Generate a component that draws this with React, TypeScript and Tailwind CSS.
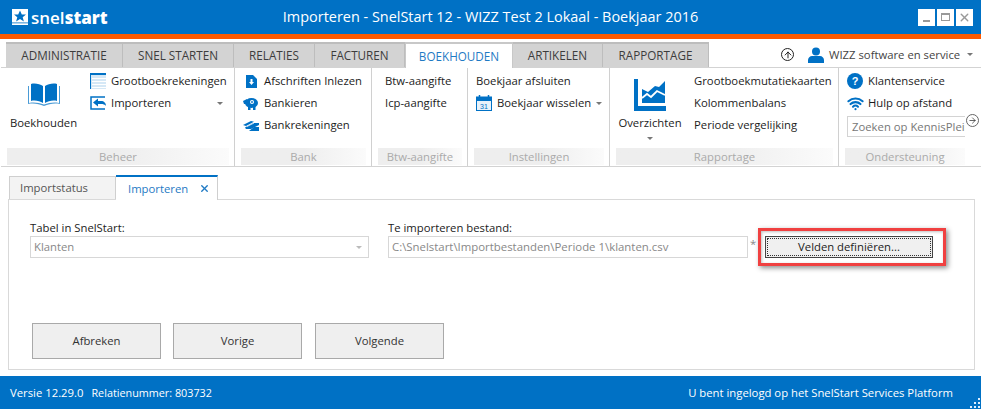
import React from "react";
import { ArrowUp, ArrowRight, X, Wifi } from "lucide-react";

function Caret({ className = "" }: { className?: string }) {
  return <span className={"inline-block w-0 h-0 border-l-[3px] border-r-[3px] border-t-[3px] border-l-transparent border-r-transparent border-t-[#777] " + className} />;
}

function Logo() {
  return (
    <svg width="16" height="16" viewBox="0 0 16 16">
      <rect width="16" height="16" fill="#fff" />
      <path d="M8 1.500l1.800 4h4.200l-3.300 2.700 1.200 4.200L8 10l-3.900 2.400 1.200-4.200L2 5.500h4.200z" fill="#0071c5" />
      <rect y="13.500" width="16" height="0.800" fill="#0071c5" />
    </svg>
  );
}
function Ledger() {
  return (
    <svg width="16" height="16" viewBox="0 0 16 16">
      <rect width="16" height="16" fill="#d5e8f6" />
      <path d="M0.500 0v16M0 0.500h16" stroke="#0071c5" />
      <rect x="0" y="0" width="16" height="2" fill="#0071c5" />
      <path d="M2 5.500h14M2 8.500h14M2 11.500h14M2 14.500h14" stroke="#fff" />
    </svg>
  );
}
function ImportIcon() {
  return (
    <svg width="16" height="14" viewBox="0 0 16 14">
      <path d="M15 1H1v12h14" fill="#fff" stroke="#0071c5" strokeWidth="1.500" />
      <path d="M3 6.500l5-4v2.500h3c3 0 5 2 5 5-1-1.500-3-2-5-2H8v2.500z" fill="#0071c5" />
    </svg>
  );
}
function Book() {
  return (
    <svg width="32" height="23" viewBox="0 0 32 23">
      <path d="M15 3C12 1 7 0 3 1v17c4-1 9 0 12 2zM17 3c3-2 8-3 12-2v17c-4-1-9 0-12 2z" fill="#0071c5" />
      <path d="M0 3v18c6-1 11 0 16 2 5-2 10-3 16-2V3h-1v17c-6-1-10 0-15 1.500C11 20 7 19 1 20V3z" fill="#4a9bd6" />
    </svg>
  );
}
function ChartIcon() {
  return (
    <svg width="32" height="32" viewBox="0 0 32 32">
      <path d="M0 0h4v27h28v5H0z" fill="#0071c5" />
      <path d="M8 10l6 3 7-6 4 1 6-6v22H8z" fill="#0071c5" />
      <path d="M8 19l5-4 4 3 6-6 8 4" fill="none" stroke="#fff" strokeWidth="1.800" />
    </svg>
  );
}
function DownloadDoc() {
  return (
    <svg width="11" height="13" viewBox="0 0 11 13">
      <path d="M0 0h7l4 4v9H0z" fill="#0071c5" />
      <path d="M4.500 4h2v3h1.500L5.500 10 3 7h1.500z" fill="#fff" />
    </svg>
  );
}
function Piggy() {
  return (
    <svg width="16" height="13" viewBox="0 0 16 13">
      <ellipse cx="8.500" cy="6" rx="6.500" ry="5" fill="#0071c5" />
      <path d="M0 4l4-2v5H1zM5 9h2.500v4H5zM10 9h2.500v4H10z" fill="#0071c5" />
      <circle cx="9" cy="5" r="2" fill="#fff" />
      <circle cx="9" cy="5" r="0.900" fill="#0071c5" />
    </svg>
  );
}
function Cards() {
  return (
    <svg width="16" height="11" viewBox="0 0 16 11">
      <path d="M0 5l8-4 3 .8-8 4.200z" fill="#0071c5" />
      <path d="M2 7.500l8-4.500h6v2l-8 4H3z" fill="#0071c5" />
      <path d="M6 11h10V7h-5z" fill="#0071c5" />
      <path d="M4 6.500l7-3.500" stroke="#fff" strokeWidth="0.800" />
    </svg>
  );
}
function Calendar() {
  return (
    <svg width="16" height="16" viewBox="0 0 16 16">
      <rect x="0.500" y="2" width="15" height="13.500" fill="#e8f2fa" stroke="#0071c5" />
      <rect x="0" y="2" width="16" height="4" fill="#0071c5" />
      <path d="M3.500 0v3M12.500 0v3" stroke="#0071c5" strokeWidth="1.500" />
      <text x="8" y="14" textAnchor="middle" fontSize="7" fontFamily="Liberation Sans" fill="#0071c5">31</text>
    </svg>
  );
}
function Person() {
  return (
    <svg width="16" height="16" viewBox="0 0 16 16">
      <circle cx="8" cy="4.500" r="4" fill="#0071c5" />
      <path d="M0 16v-3c0-2 2-4 4-4h8c2 0 4 2 4 4v3z" fill="#0071c5" />
    </svg>
  );
}
function Help() {
  return (
    <svg width="16" height="16" viewBox="0 0 16 16">
      <circle cx="8" cy="8" r="8" fill="#0071c5" />
      <text x="8" y="12" textAnchor="middle" fontSize="11" fontWeight="700" fontFamily="Liberation Sans" fill="#fff">?</text>
    </svg>
  );
}
function Grip() {
  return (
    <svg width="11" height="11" viewBox="0 0 11 11" className="absolute right-0 bottom-0">
      <path d="M8 0h2v2H8zM4 4h2v2H4zM8 4h2v2H8zM0 8h2v2H0zM4 8h2v2H4zM8 8h2v2H8z" fill="#dbeeff" />
    </svg>
  );
}

function Item({ icon, label, caret, w }: { icon?: React.ReactNode; label: string; caret?: boolean; w?: string }) {
  return (
    <div className={"flex items-center h-[22px] text-[#1c1c1c] whitespace-nowrap " + (w ?? "")}>
      {icon && <span className="flex justify-center items-center w-[20px] mr-[3px] shrink-0">{icon}</span>}
      <span>{label}</span>
      {caret && <Caret className="ml-auto" />}
    </div>
  );
}

function Group({ width, label, children, last }: { width: string; label: string; children: React.ReactNode; last?: boolean }) {
  return (
    <div className={"flex flex-col h-full shrink-0 pl-[6px] pr-[5px] pb-[1px] " + width + (last ? "" : " border-r border-[#d0d0d0]")}>
      <div className="flex-1 min-h-0 pt-[2px]">{children}</div>
      <div className="h-[17px] text-center text-[#aaa] leading-[17px] bg-gradient-to-r from-[#eeeeee] via-[#eeeeee] to-[#fbfbfb]">{label}</div>
    </div>
  );
}

const tabs = ["ADMINISTRATIE", "SNEL STARTEN", "RELATIES", "FACTUREN", "BOEKHOUDEN", "ARTIKELEN", "RAPPORTAGE"];
const tabW = ["w-[117px]", "w-[111px]", "w-[81px]", "w-[90px]", "w-[108px]", "w-[90px]", "w-[106px]"];

function ActionButton({ label, className = "" }: { label: string; className?: string }) {
  return <div className={"w-[129px] h-[36px] flex items-center justify-center bg-[#efefef] border border-[#a9a9a9] text-[#333] " + className}>{label}</div>;
}

export default function App() {
  return (
    <div className="w-[981px] h-[409px] bg-white flex flex-col overflow-hidden text-[11.300px] leading-[16px]" style={{ fontFamily: '"Open Sans", "Noto Sans", sans-serif' }}>
      {/* Title */}
      <div className="h-[34px] bg-[#0071c5] flex items-center shrink-0 pl-[12px] pr-[8px] text-white">
        <div className="flex items-center w-[110px]">
          <Logo />
          <span className="ml-[3px] text-[17px] leading-none font-semibold">snel<b>start</b></span>
        </div>
        <div className="flex-1 text-center text-[14.450px] pr-[59px]">Importeren - SnelStart 12 - WIZZ Test 2 Lokaal - Boekjaar 2016</div>
        <div className="flex gap-[2px]">
          <span className="w-[17px] h-[17px] bg-white flex items-end justify-center pb-[4px]"><span className="w-[7px] h-[2px] bg-[#999]" /></span>
          <span className="w-[17px] h-[17px] bg-white flex items-center justify-center"><span className="w-[9px] h-[8px] border border-[#999] border-t-2" /></span>
          <span className="w-[17px] h-[17px] bg-white flex items-center justify-center text-[#999]"><X size={13} strokeWidth={2.5} /></span>
        </div>
      </div>
      <div className="h-[5px] bg-[#ff5a00] shrink-0" />

      {/* Tabs */}
      <div className="h-[28px] flex items-end shrink-0 pl-[6px] relative z-10">
        {tabs.map((t, i) => (
          <div key={t} className={"flex items-center justify-center border-t-2 text-[11.700px] pb-[1px] " + tabW[i] + (t === "BOEKHOUDEN" ? " bg-white text-[#1f7ac4] -mb-[1px] h-[26px] border-l border-r border-[#c8c8c8]" : " h-[25px] border-[#bdbdbd] bg-[#d3d3d3] text-[#3c3c3c] border-r")}>
            {t}
          </div>
        ))}
        <div className="flex-1 flex items-center h-[25px] pl-[72px] text-[#444]">
          <span className="w-[13px] h-[13px] border border-[#222] rounded-full flex items-center justify-center text-black shrink-0"><ArrowUp size={10} strokeWidth={2} /></span>
          <span className="ml-[14px]"><Person /></span>
          <span className="ml-[5px] whitespace-nowrap">WIZZ software en service</span>
          <Caret className="ml-[7px]" />
        </div>
      </div>

      {/* Ribbon */}
      <div className="h-[100px] ml-[1px] border-t border-b border-[#d3d3d3] flex shrink-0 bg-white">
        <Group width="w-[234px]" label="Beheer">
          <div className="flex">
            <div className="w-[73px] mr-[8px] flex flex-col items-center pt-[13px]">
              <Book />
              <span className="mt-[9px] text-[#1c1c1c]">Boekhouden</span>
            </div>
            <div className="flex-1">
              <Item icon={<Ledger />} label="Grootboekrekeningen" />
              <Item icon={<ImportIcon />} label="Importeren" caret w="pr-[6px]" />
            </div>
          </div>
        </Group>
        <Group width="w-[137px]" label="Bank">
          <Item icon={<DownloadDoc />} label="Afschriften Inlezen" />
          <Item icon={<Piggy />} label="Bankieren" />
          <Item icon={<Cards />} label="Bankrekeningen" />
        </Group>
        <Group width="w-[96px]" label="Btw-aangifte">
          <div className="pl-[7px]">
            <Item label="Btw-aangifte" />
            <Item label="Icp-aangifte" />
          </div>
        </Group>
        <Group width="w-[142px]" label="Instellingen">
          <Item label="Boekjaar afsluiten" w="pl-[2px]" />
          <div className="flex items-center">
            <Item icon={<Calendar />} label="Boekjaar wisselen" />
            <Caret className="ml-[5px]" />
          </div>
        </Group>
        <Group width="w-[229px]" label="Rapportage">
          <div className="flex">
            <div className="w-[68px] mr-[10px] flex flex-col items-center pt-[9px] text-[#1c1c1c]">
              <ChartIcon />
              <span className="mt-[4px] whitespace-nowrap">Overzichten</span>
              <Caret className="mt-[6px]" />
            </div>
            <div>
              <Item label="Grootboekmutatiekaarten" />
              <Item label="Kolommenbalans" />
              <Item label="Periode vergelijking" />
            </div>
          </div>
        </Group>
        <Group width="flex-1 !pr-[16px]" label="Ondersteuning" last>
          <Item icon={<Help />} label="Klantenservice" />
          <Item icon={<Wifi size={17} stroke="#0071c5" strokeWidth={3} />} label="Hulp op afstand" />
          <div className="relative ml-[2px] mt-[2px]">
            <div className="w-[118px] h-[21px] border border-r-0 border-[#d3d3d3] pl-[4px] flex items-center text-[#777] overflow-hidden whitespace-nowrap">Zoeken op KennisPlein</div>
            <span className="absolute left-[119px] -top-[2px] w-[13px] h-[13px] bg-white border border-[#666] rounded-full flex items-center justify-center text-[#333]"><ArrowRight size={9} strokeWidth={2} /></span>
          </div>
        </Group>
      </div>

      {/* Document */}
      <div className="flex-1 min-h-0 flex flex-col pl-[8px] pr-[6px] pt-[6px]">
        <div className="flex h-[26px] items-end pl-[1px] shrink-0 relative z-10">
          <div className="w-[107px] h-[23px] bg-[#f3f3f3] border border-[#cfcfcf] border-b-0 flex items-center pl-[10px] text-[#555]">Importstatus</div>
          <div className="w-[102px] h-[25px] -mb-[1px] bg-white border-r border-[#cfcfcf] border-t-2 border-t-[#0071c5] flex items-center pl-[12px] text-[#1f7ac4]">
            Importeren
            <X size={11} strokeWidth={3} className="ml-[11px] text-[#1f7ac4]" />
          </div>
        </div>
        <div className="h-[171px] border border-[#d9d9d9] shrink-0 flex flex-col pl-[21px] pt-[21px]">
          <div className="flex h-[45px]">
            <div className="w-[358px]">
              <div className="h-[14px] leading-[14px] text-[#222]">Tabel in SnelStart:</div>
              <div className="w-[339px] h-[22px] border border-[#d7d7d7] mt-[1px] flex items-center pl-[3px] pr-[6px] text-[#888]">
                Klanten
                <Caret className="ml-auto !border-t-[#bbb]" />
              </div>
            </div>
            <div className="w-[370px]">
              <div className="h-[14px] leading-[14px] text-[#222]">Te importeren bestand:</div>
              <div className="flex items-start mt-[1px]">
                <div className="w-[360px] h-[22px] border border-[#d7d7d7] flex items-center pl-[3px] text-[#888] text-[11.400px] whitespace-nowrap">C:\Snelstart\Importbestanden\Periode 1\klanten.csv</div>
                <span className="ml-[2px] text-[#888]">*</span>
              </div>
            </div>
            <div className="mt-[7px] h-[38px] w-[188px] border-[3px] border-[#f04040] shadow-[2px_2px_5px_rgba(0,0,0,0.45),inset_1px_1px_3px_rgba(0,0,0,0.25)] pl-[4px] pt-[5px]">
              <div className="w-[168px] h-[22px] bg-[#f0f0f0] border border-[#444] p-[1px]">
                <div className="w-full h-full border border-dotted border-[#333] flex items-center justify-center text-[#222]">Velden definiëren...</div>
              </div>
            </div>
          </div>
          <div className="flex gap-[12px] ml-[2px] mt-[57px]">
            <ActionButton label="Afbreken" />
            <ActionButton label="Vorige" />
            <ActionButton label="Volgende" className="ml-[1px]" />
          </div>
        </div>
      </div>

      {/* Status */}
      <div className="relative h-[33px] bg-[#0071c5] text-white flex items-center pl-[10px] pr-[28px] shrink-0">
        <span>Versie 12.29.0</span>
        <span className="ml-[8px] text-[10.800px]">Relatienummer: 803732</span>
        <span className="ml-auto">U bent ingelogd op het SnelStart Services Platform</span>
        <Grip />
      </div>
    </div>
  );
}
